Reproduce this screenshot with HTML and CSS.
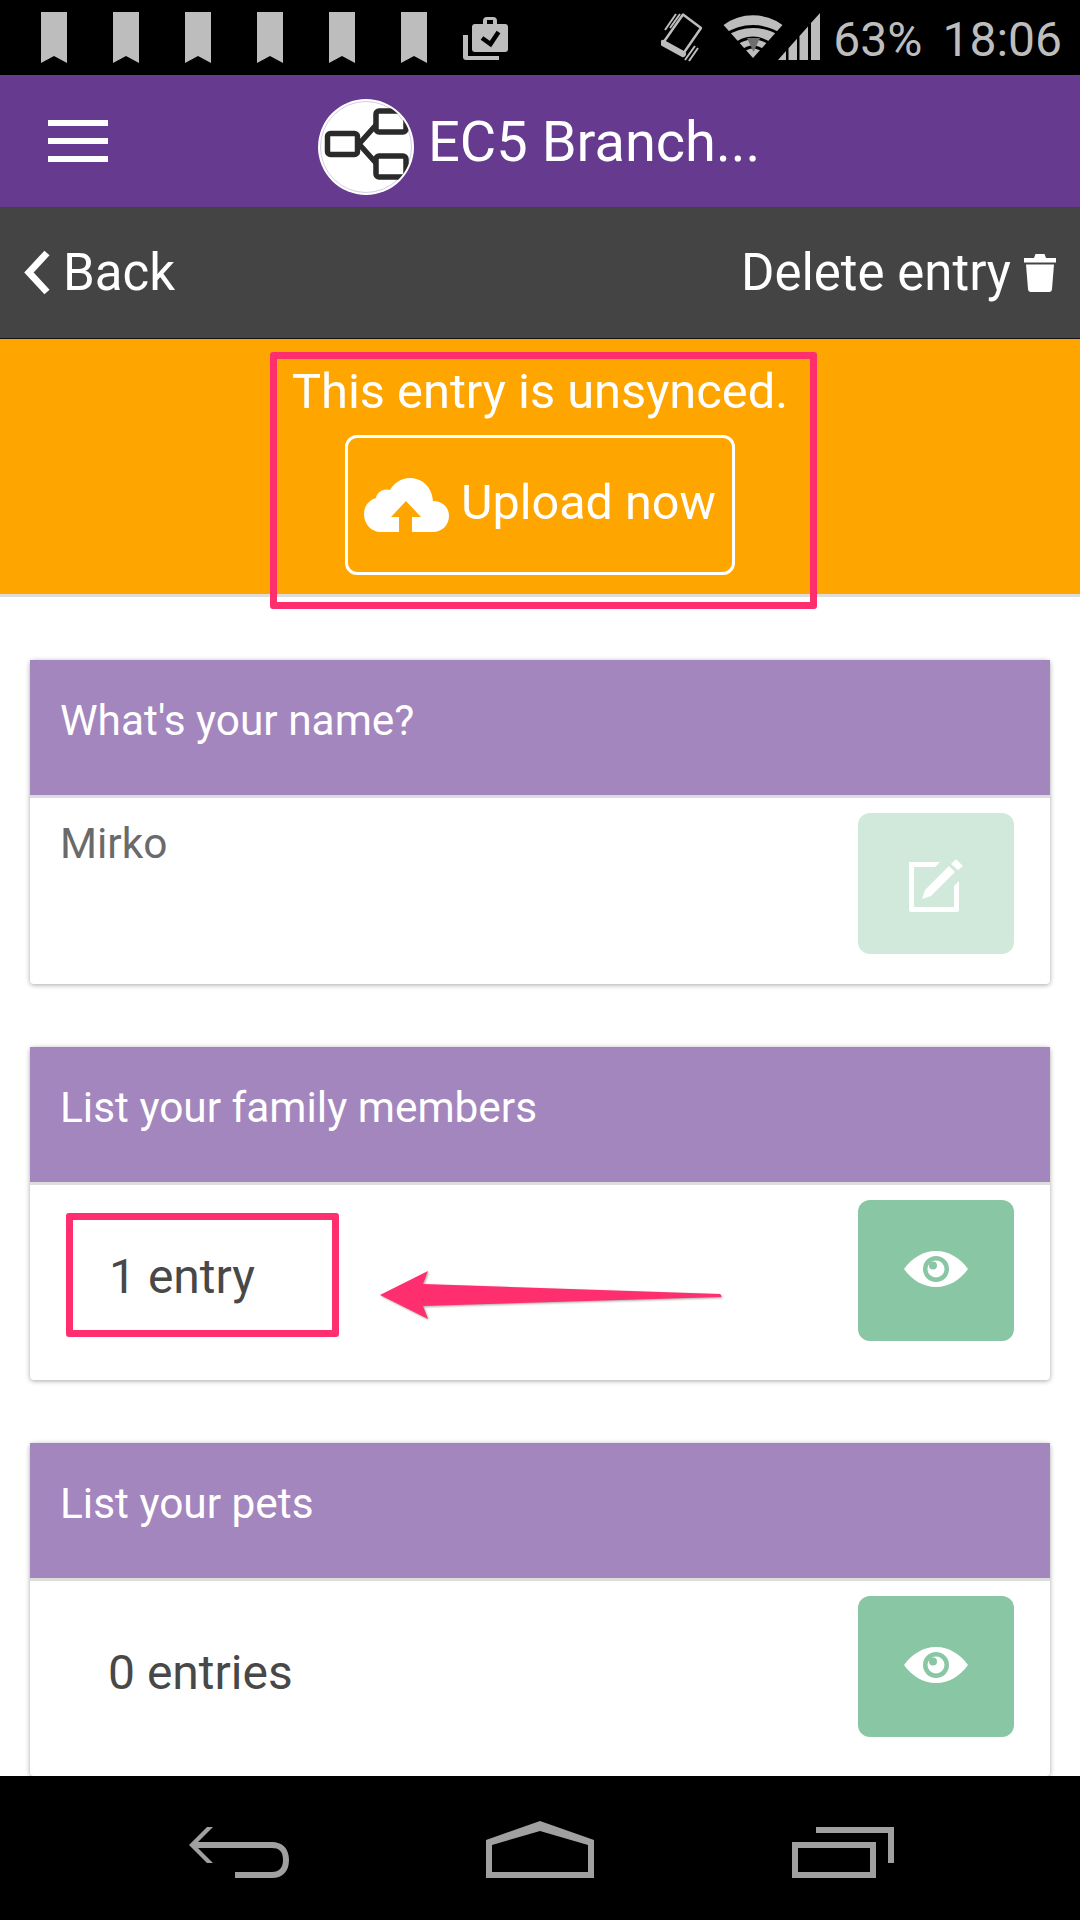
FILE: index.html
```html
<!DOCTYPE html>
<html lang="en">
<head>
<meta charset="utf-8">
<title>EC5 Branch</title>
<link rel="stylesheet" href="styles.css">
</head>
<body>
<div class="app">
  <div class="status">
    <div class="status-left">
      <svg class="bookmark" viewBox="0 0 26 51"><path d="M0 0H26V51L13 44L0 51Z"/></svg>
      <svg class="bookmark" viewBox="0 0 26 51"><path d="M0 0H26V51L13 44L0 51Z"/></svg>
      <svg class="bookmark" viewBox="0 0 26 51"><path d="M0 0H26V51L13 44L0 51Z"/></svg>
      <svg class="bookmark" viewBox="0 0 26 51"><path d="M0 0H26V51L13 44L0 51Z"/></svg>
      <svg class="bookmark" viewBox="0 0 26 51"><path d="M0 0H26V51L13 44L0 51Z"/></svg>
      <svg class="bookmark" viewBox="0 0 26 51"><path d="M0 0H26V51L13 44L0 51Z"/></svg>
      <svg class="briefcase" viewBox="0 0 46 44">
        <path d="M0 18H5V39H36V43H3Q0 43 0 40Z"/>
        <path fill-rule="evenodd" d="M20 7V4Q20 0 24 0H30Q34 0 34 4V7H42Q45 7 45 10V32Q45 35 42 35H12Q9 35 9 32V10Q9 7 12 7ZM24 7H30V3H24Z"/>
        <path class="check" d="M19 21L27.500 27L35.500 15"/>
      </svg>
    </div>
    <div class="status-right">
      <svg class="vibrate" viewBox="0 0 41 49">
        <path class="phone" d="M22 1.500L40 15L22 41L2 30Z"/>
        <path class="phone-chin" d="M2 30L22 41"/>
        <path d="M9 15L19 1M4 17L15 1M24 47L34 33M28 48L37 35"/>
      </svg>
      <svg class="wifi" viewBox="0 0 60 44">
        <path class="wifi-fill" d="M0.500 11A50 50 0 0 1 59.500 11L30 44Z"/>
        <path class="wifi-gap" d="M0 22Q30 3 60 22"/>
        <path class="wifi-gap" d="M8 33Q30 15 52 33"/>
        <path class="wifi-gap" d="M18 38Q30 28 42 38"/>
        <path class="wifi-dark" d="M24 24H37L30.500 38Z"/>
      </svg>
      <svg class="signal" viewBox="0 0 42 47">
        <path d="M0 47L8 38V47ZM10.500 35.200L19 25.700V47H10.500ZM21.500 23L30 13.400V47H21.500ZM33 10.100L42 0V47H33Z"/>
      </svg>
      <span class="battery">63%</span>
      <span class="clock">18:06</span>
    </div>
  </div>

  <header class="topbar">
    <div class="burger"><span></span><span></span><span></span></div>
    <svg class="logo" viewBox="0 0 96 96">
      <defs><clipPath id="logoClip"><circle cx="48" cy="48" r="46"/></clipPath></defs>
      <circle cx="48" cy="48" r="48" fill="#fff"/>
      <circle cx="48" cy="48" r="45.500" fill="none" stroke="#d5cbe6" stroke-width="1"/>
      <g clip-path="url(#logoClip)" fill="none" stroke="#2a2a2a" stroke-width="5.500" stroke-linejoin="round">
        <rect x="9.500" y="34.500" width="30" height="21" rx="3"/>
        <rect x="58" y="12" width="30" height="21" rx="3"/>
        <rect x="58" y="57" width="30" height="21" rx="3"/>
        <path d="M41 45L58 26M41 45L58 64"/>
      </g>
    </svg>
    <h1 class="title">EC5 Branch...</h1>
  </header>

  <nav class="actionbar">
    <div class="back">
      <svg class="chevron" viewBox="0 0 26 45"><path d="M23 3L5 22.500L23 42"/></svg>
      <span>Back</span>
    </div>
    <div class="delete">
      <span>Delete entry</span>
      <svg class="trash" viewBox="0 0 32 38"><path d="M0 4H10L11.500 0H20.500L22 4H32V8.500H0ZM2 10.500H30L28 35Q27.800 38 25 38H7Q4.200 38 4 35Z"/></svg>
    </div>
  </nav>

  <main class="content">
    <section class="banner">
      <p class="banner-text">This entry is unsynced.</p>
      <button class="upload">
        <svg class="cloud" viewBox="0 0 85 54"><path d="M17 54C7 54 0 46 0 36C0 28 5 22 12 20C13 14 19 10 26 12C30 5 37 0 46 0C58 0 68 9 69 23C78 23 85 29 85 38C85 47 78 54 69 54H48V39H57L42 23L27 39H35V54Z"/></svg>
        <span class="upload-label">Upload now</span>
      </button>
      <div class="mark mark-banner"></div>
    </section>

    <section class="card">
      <h2 class="card-head">What's your name?</h2>
      <div class="card-body card-body-text">
        <p class="answer">Mirko</p>
        <div class="action action-faded">
          <svg class="edit" viewBox="0 0 54 55">
            <path d="M0 5H31L26 10H5V50H45V29L50 24V53Q50 55 48 55H2Q0 55 0 53Z"/>
            <path d="M13 42L16 33L40 9L46 15L22 39ZM42 7L46 3Q47 2 48 3L53 8Q54 9 53 10L49 13Z"/>
          </svg>
        </div>
      </div>
    </section>

    <section class="card">
      <h2 class="card-head">List your family members</h2>
      <div class="card-body">
        <p class="count">1 entry</p>
        <div class="action">
          <svg class="eye" viewBox="0 0 64 36">
            <path class="eye-shape" d="M0 18C8 7 19 0 32 0C45 0 56 7 64 18C56 29 45 36 32 36C19 36 8 29 0 18Z"/>
            <circle class="eye-iris" cx="32" cy="18" r="13"/>
            <circle class="eye-shape" cx="32" cy="18" r="8.500"/>
            <circle class="eye-iris" cx="29" cy="14.500" r="4"/>
          </svg>
        </div>
        <div class="mark mark-count"></div>
        <svg class="arrow" viewBox="0 0 345 52"><path d="M0 25L48 1L43 14L340 24Q342 26 341 27L43 36L48 49Z"/></svg>
      </div>
    </section>

    <section class="card">
      <h2 class="card-head">List your pets</h2>
      <div class="card-body">
        <p class="count count-pets">0 entries</p>
        <div class="action">
          <svg class="eye" viewBox="0 0 64 36">
            <path class="eye-shape" d="M0 18C8 7 19 0 32 0C45 0 56 7 64 18C56 29 45 36 32 36C19 36 8 29 0 18Z"/>
            <circle class="eye-iris" cx="32" cy="18" r="13"/>
            <circle class="eye-shape" cx="32" cy="18" r="8.500"/>
            <circle class="eye-iris" cx="29" cy="14.500" r="4"/>
          </svg>
        </div>
      </div>
    </section>
  </main>

  <footer class="navbar">
    <svg class="nav-back" viewBox="189 1827 101 52"><path d="M207 1827H213L198 1842H272C282 1842 289 1848 289 1860C289 1872 282 1878 272 1878H235V1872H272C279 1872 283 1868 283 1860C283 1851 279 1848 272 1848H198L213 1863H207L189 1845Z"/></svg>
    <svg class="nav-home" viewBox="486 1821 108 57"><path fill-rule="evenodd" d="M540 1821L594 1840V1878H486V1840ZM540 1831L492 1845V1872H588V1845Z"/></svg>
    <svg class="nav-recent" viewBox="792 1827 102 51"><path fill-rule="evenodd" d="M792 1842H876V1878H792ZM798 1848V1872H870V1848Z"/><path d="M816 1827H894V1863H888V1833H816Z"/></svg>
  </footer>
</div>
</body>
</html>
```

FILE: styles.css
```css
* { box-sizing: border-box; }
html, body { margin: 0; padding: 0; }
body { font-family: Roboto, "Liberation Sans", sans-serif; background: #000; }
p, h1, h2 { margin: 0; font-weight: 400; }

.app { width: 1080px; height: 1920px; display: flex; flex-direction: column; overflow: hidden; }

.status { height: 75px; flex: none; background: #000; display: flex; justify-content: space-between; align-items: flex-start; color: #bdbdbd; }
.status-left { display: flex; gap: 46px; padding: 12px 0 0 41px; }
.bookmark { width: 26px; height: 51px; fill: #bdbdbd; }
.briefcase { width: 46px; height: 44px; margin: 5px 0 0 -10px; fill: #bdbdbd; }
.briefcase .check { fill: none; stroke: #000; stroke-width: 4.500; }
.status-right { display: flex; align-items: flex-start; padding: 13px 18px 0 0; }
.vibrate { width: 41px; height: 49px; fill: none; stroke: #bdbdbd; stroke-width: 2; }
.vibrate .phone { stroke-width: 2.500; stroke-linejoin: round; }
.vibrate .phone-chin { stroke-width: 6; stroke-linecap: round; }
.wifi { width: 60px; height: 44px; margin: 1px 0 0 21px; }
.wifi-fill { fill: #bdbdbd; }
.wifi-gap { fill: none; stroke: #000; stroke-width: 2.800; }
.wifi-dark { fill: #6e6e6e; }
.signal { width: 42px; height: 47px; margin-left: -5px; fill: #bdbdbd; }
.battery, .clock { font-size: 48px; line-height: 47px; margin-top: 3px; }
.battery { margin-left: 13px; }
.clock { margin-left: 20px; }

.topbar { height: 132px; flex: none; background: #663a8e; display: flex; align-items: center; color: #fff; padding-left: 48px; }
.burger { width: 60px; display: flex; flex-direction: column; gap: 12px; }
.burger span { display: block; height: 6px; background: #fff; }
.logo { width: 96px; height: 96px; margin: 12px 0 0 210px; flex: none; }
.title { font-size: 56px; line-height: 64px; margin: 2px 0 0 14px; }

.actionbar { height: 132px; flex: none; background: #444; border-bottom: 1px solid #111; display: flex; justify-content: space-between; align-items: center; color: #fff; font-size: 51px; padding: 0 24px; }
.back { display: flex; align-items: center; gap: 13px; }
.chevron { width: 26px; height: 45px; fill: none; stroke: #fff; stroke-width: 7; }
.delete { display: flex; align-items: center; gap: 13px; }
.trash { width: 32px; height: 38px; fill: #fff; }

.content { flex: 1; min-height: 0; background: #fff; overflow: hidden; }

.banner { position: relative; height: 258px; background: #ffa500; border-bottom: 3px solid #ddd; display: flex; flex-direction: column; align-items: center; color: #fff; padding-top: 25px; margin-bottom: 63px; }
.banner-text { font-size: 48.800px; line-height: 56px; }
.upload { width: 390px; height: 140px; margin-top: 15px; background: transparent; border: 3px solid #fff; border-radius: 12px; color: #fff; font: inherit; font-size: 48.500px; display: flex; align-items: center; justify-content: center; gap: 12px; padding: 0; }
.upload-label { padding-bottom: 5px; }
.cloud { width: 85px; height: 54px; fill: #fff; }

.mark { position: absolute; border: 7px solid #ff2f6f; border-radius: 3px; }
.mark-banner { left: 270px; top: 13px; width: 547px; height: 257px; }
.mark-count { left: 36px; top: 28px; width: 273px; height: 124px; }
.arrow { position: absolute; left: 350px; top: 85px; width: 345px; height: 52px; fill: #ff2f6f; filter: drop-shadow(1px 1px 1px rgba(0,0,0,.35)); }

.card { margin: 0 30px 63px; background: #fff; border-radius: 4px; box-shadow: 0 1px 5px rgba(0,0,0,.35); }
.card-head { height: 135px; background: #a386bd; color: #fff; font-size: 42.400px; line-height: 122px; padding-left: 30px; }
.card-body { position: relative; height: 198px; border-top: 3px solid #ddd; display: flex; justify-content: space-between; align-items: flex-start; padding: 15px 36px 0 0; }
.card-body-text { height: 189px; }
.answer { font-size: 42.400px; line-height: 48px; color: #6a6a6a; padding: 7px 0 0 30px; }
.count { font-size: 48px; line-height: 54px; color: #484848; padding: 50px 0 0 79px; }
.count-pets { padding: 50px 0 0 78px; }
.action { width: 156px; height: 141px; background: #89c6a4; border-radius: 12px; display: flex; align-items: center; justify-content: center; }
.action-faded { background: #d1e9da; }
.edit { width: 54px; height: 55px; fill: #fff; margin-top: 2px; }
.eye { width: 64px; height: 36px; margin-top: -3px; }
.eye-shape { fill: #fff; }
.eye-iris { fill: #89c6a4; }

.navbar { height: 144px; flex: none; background: #000; position: relative; }
.navbar svg { position: absolute; fill: #a0a0a0; }
.nav-back { left: 189px; top: 51px; width: 101px; height: 52px; }
.nav-home { left: 486px; top: 45px; width: 108px; height: 57px; }
.nav-recent { left: 792px; top: 51px; width: 102px; height: 51px; }
```
